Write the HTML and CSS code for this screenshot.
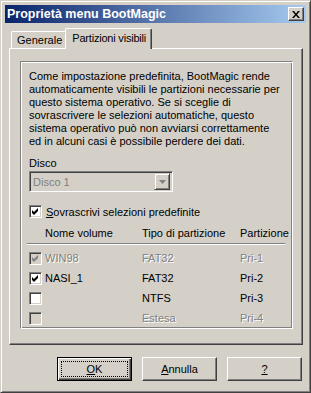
FILE: index.html
```html
<!DOCTYPE html>
<html lang="it">
<head>
    <meta charset="UTF-8">
    <title>Proprietà menu BootMagic</title>
    <link rel="stylesheet" href="styles.css">
</head>
<body>
    <div class="window">
        <div class="titlebar">
            <span class="title">Proprietà menu BootMagic</span>
            <span class="close-btn">
                <svg width="8" height="7" viewBox="0 0 8 7">
                    <path d="M0 0h2l2 2.5 2-2.5h2l-3 3.5 3 3.5h-2l-2-2.5-2 2.5h-2l3-3.5z" fill="#000"/>
                </svg>
            </span>
        </div>

        <div class="content">
            <div class="tabs">
                <div class="tab">Generale</div>
                <div class="tab active">Partizioni visibili</div>
            </div>

            <div class="panel">
                <div class="group">
                    <p class="info">Come impostazione predefinita, BootMagic rende<br>
                    automaticamente visibili le partizioni necessarie per<br>
                    questo sistema operativo. Se si sceglie di<br>
                    sovrascrivere le selezioni automatiche, questo<br>
                    sistema operativo può non avviarsi correttamente<br>
                    ed in alcuni casi è possibile perdere dei dati.</p>

                    <div class="field-label">Disco</div>
                    <div class="combo">
                        <span class="combo-text">Disco 1</span>
                        <span class="combo-btn">
                            <svg width="7" height="4" viewBox="0 0 7 4"><path d="M0 0h7l-3.5 4z" fill="#808080"/></svg>
                        </span>
                    </div>

                    <label class="check-row override">
                        <span class="box"><svg class="tick" width="7" height="7" viewBox="0 0 7 7"><path d="M0 2L2 4L6 0V3L2 7L0 5Z"/></svg></span>
                        <span><u>S</u>ovrascrivi selezioni predefinite</span>
                    </label>

                    <div class="list-head">
                        <span class="col-name">Nome volume</span>
                        <span class="col-type">Tipo di partizione</span>
                        <span class="col-part">Partizione</span>
                    </div>
                    <div class="sep"></div>

                    <div class="row disabled">
                        <span class="box"><svg class="tick" width="7" height="7" viewBox="0 0 7 7"><path d="M0 2L2 4L6 0V3L2 7L0 5Z"/></svg></span>
                        <span class="col-name">WIN98</span>
                        <span class="col-type">FAT32</span>
                        <span class="col-part">Pri-1</span>
                    </div>
                    <div class="row">
                        <span class="box"><svg class="tick" width="7" height="7" viewBox="0 0 7 7"><path d="M0 2L2 4L6 0V3L2 7L0 5Z"/></svg></span>
                        <span class="col-name">NASI_1</span>
                        <span class="col-type">FAT32</span>
                        <span class="col-part">Pri-2</span>
                    </div>
                    <div class="row">
                        <span class="box"></span>
                        <span class="col-name"></span>
                        <span class="col-type">NTFS</span>
                        <span class="col-part">Pri-3</span>
                    </div>
                    <div class="row disabled">
                        <span class="box"></span>
                        <span class="col-name"></span>
                        <span class="col-type">Estesa</span>
                        <span class="col-part">Pri-4</span>
                    </div>
                </div>
            </div>

            <div class="buttons">
                <button class="btn default"><span class="focus"><u>O</u>K</span></button>
                <button class="btn"><u>A</u>nnulla</button>
                <button class="btn"><u>?</u></button>
            </div>
        </div>
    </div>
</body>
</html>
```

FILE: styles.css
```css
* {
    box-sizing: border-box;
}
body {
    margin: 0;
    font-family: "Liberation Sans", Arial, sans-serif;
    font-size: 11px;
    color: #000;
    background: #d4d0c8;
}
.window {
    width: 311px;
    height: 393px;
    background: #d4d0c8;
    padding: 4px;
    border: 1px solid;
    border-color: #d4d0c8 #404040 #404040 #d4d0c8;
    box-shadow: inset 1px 1px 0 #fff, inset -1px -1px 0 #808080;
}
.titlebar {
    height: 18px;
    display: flex;
    align-items: center;
    justify-content: space-between;
    padding: 0 2px 0 2px;
    background: linear-gradient(to right, #0a246a, #a6caf0);
}
.title {
    color: #fff;
    font-weight: bold;
    font-size: 12.5px;
}
.close-btn {
    width: 16px;
    height: 14px;
    display: flex;
    align-items: center;
    justify-content: center;
    background: #d4d0c8;
    border: 1px solid;
    border-color: #fff #404040 #404040 #fff;
    box-shadow: inset -1px -1px 0 #808080;
}
.content {
    padding: 5px 0 0 4px;
}
.tabs {
    display: flex;
    align-items: flex-end;
    height: 20px;
    padding-left: 2px;
}
.tab {
    height: 17px;
    padding: 2px 4px 0 5px;
    border: 1px solid;
    border-bottom: none;
    border-color: #fff #404040 #fff #fff;
    box-shadow: inset -1px 0 0 #808080;
    border-radius: 2px 2px 0 0;
}
.tab.active {
    height: 21px;
    margin-bottom: -1px;
    padding: 3px 5px 0 6px;
    margin-left: -2px;
    letter-spacing: -0.2px;
    background: #d4d0c8;
    position: relative;
    z-index: 1;
}
.panel {
    width: 294px;
    height: 297px;
    border: 1px solid;
    border-color: #fff #404040 #404040 #fff;
    box-shadow: inset -1px -1px 0 #808080;
    padding: 12px 10px 0 10px;
}
.group {
    width: 273px;
    height: 268px;
    border: 1px solid;
    border-color: #808080 #fff #fff #808080;
    box-shadow: inset 1px 1px 0 #fff, inset -1px -1px 0 #808080;
    padding: 8px 0 0 8px;
}
.info {
    margin: 0;
    white-space: nowrap;
    line-height: 13px;
}
.field-label {
    margin-top: 9px;
    line-height: 13px;
}
.combo {
    width: 144px;
    height: 21px;
    margin-top: 1px;
    display: flex;
    align-items: center;
    justify-content: space-between;
    padding: 0 2px 0 3px;
    border: 1px solid;
    border-color: #808080 #fff #fff #808080;
    box-shadow: inset 1px 1px 0 #404040, inset -1px -1px 0 #d4d0c8;
    color: #808080;
}
.combo-btn {
    width: 16px;
    height: 17px;
    display: flex;
    align-items: center;
    justify-content: center;
    border: 1px solid;
    border-color: #d4d0c8 #404040 #404040 #d4d0c8;
    box-shadow: inset 1px 1px 0 #fff, inset -1px -1px 0 #808080;
}
.check-row {
    display: flex;
    align-items: center;
    gap: 4px;
    height: 13px;
}
.override {
    margin-top: 13px;
}
.box {
    width: 13px;
    height: 13px;
    flex: none;
    display: flex;
    align-items: center;
    justify-content: center;
    background: #fff;
    border: 1px solid;
    border-color: #808080 #fff #fff #808080;
    box-shadow: inset 1px 1px 0 #404040, inset -1px -1px 0 #d4d0c8;
}
.tick {
    fill: #000;
}
.list-head {
    display: flex;
    margin-top: 9px;
    height: 13px;
    line-height: 13px;
}
.col-name {
    width: 113px;
    padding-left: 16px;
    flex: none;
}
.col-type {
    width: 98px;
    flex: none;
}
.col-part {
    flex: none;
}
.sep {
    width: 258px;
    height: 2px;
    margin: 3px 0 0 -2px;
    border-top: 1px solid #808080;
    border-bottom: 1px solid #fff;
}
.row {
    display: flex;
    align-items: center;
    height: 13px;
    line-height: 13px;
    margin-top: 7px;
}
.row .col-name {
    padding-left: 3px;
    width: 100px;
}
.disabled {
    color: #808080;
    text-shadow: 1px 1px 0 #fff;
}
.disabled .box {
    background: #d4d0c8;
}
.disabled .tick {
    fill: #808080;
}
.buttons {
    display: flex;
    justify-content: flex-end;
    gap: 10px;
    padding-right: 4px;
    margin-top: 12px;
}
.btn {
    width: 75px;
    height: 24px;
    padding: 0;
    font: inherit;
    color: #000;
    background: #d4d0c8;
    border: 1px solid;
    border-color: #fff #404040 #404040 #fff;
    box-shadow: inset -1px -1px 0 #808080;
}
.btn.default {
    border: 1px solid #000;
    box-shadow: inset 1px 1px 0 #fff, inset -1px -1px 0 #404040, inset -2px -2px 0 #808080;
    padding: 3px;
}
.focus {
    display: flex;
    align-items: center;
    justify-content: center;
    height: 100%;
    outline: 1px dotted #000;
    outline-offset: -1px;
}
```
